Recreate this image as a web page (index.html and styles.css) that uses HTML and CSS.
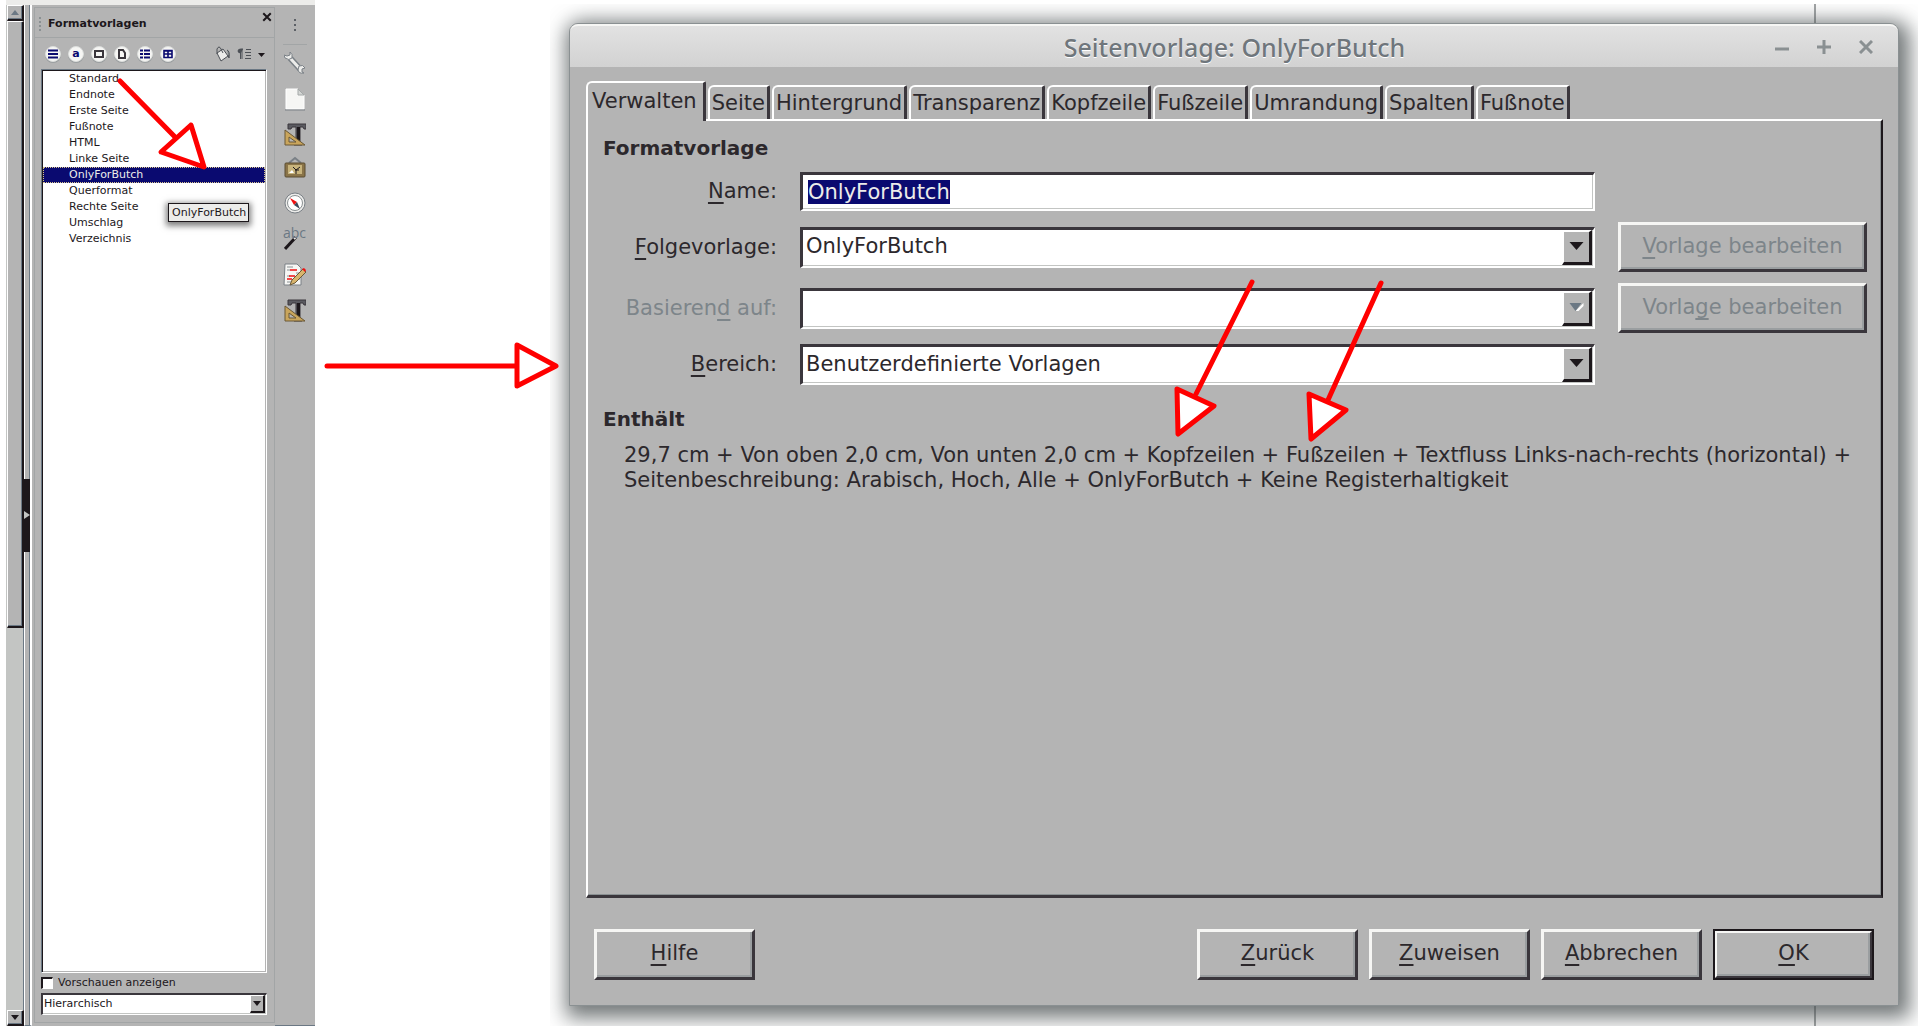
FILE: index.html
```html
<!DOCTYPE html>
<html lang="de">
<head>
<meta charset="utf-8">
<title>Seitenvorlage: OnlyForButch</title>
<link rel="stylesheet" href="styles.css">
</head>
<body>
<svg width="0" height="0" class="defs" aria-hidden="true">
  <symbol id="design" viewBox="0 0 22 24">
    <path d="M4 1h18v5h-2l-1-2h-3v15l2 1v2h-8v-2l2-1V4H8L7 6H4z" fill="#5a5a60" stroke="#3a363c"/>
    <path d="M13 4h3v16h-3z" fill="#1c171b"/>
    <path d="M1 7v15h20z" fill="#c9a55c" stroke="#6a5836"/>
    <path d="M5 14v5h7z" fill="#b4b4b4" stroke="#6a5836"/>
  </symbol>
</svg>
<main class="page">
  <section class="writer" aria-label="Formatvorlagen">
    <div class="scroll">
      <button class="scroll-btn" aria-label="Nach oben"><svg width="8" height="5" viewBox="0 0 8 5"><path d="M4 0l4 5H0z" fill="#6b7884"/></svg></button>
      <div class="thumb"></div>
      <div class="trough"></div>
      <button class="scroll-btn" aria-label="Nach unten"><svg width="8" height="5" viewBox="0 0 8 5"><path d="M0 0h8L4 5z" fill="#1c171b"/></svg></button>
    </div>
    <div class="splitter"><button class="handle" aria-label="Seitenleiste ausblenden"><svg width="6" height="8" viewBox="0 0 6 8"><path d="M0 0l6 4-6 4z" fill="#c3c5c3"/></svg></button></div>
    <div class="deck">
      <header class="deck-head">
        <i class="grip"></i>
        <h2>Formatvorlagen</h2>
        <button class="plain close" aria-label="Schließen"><svg width="10" height="10" viewBox="0 0 8 8"><path d="M1 1l6 6M7 1L1 7" stroke="#1c171b" stroke-width="1.600"/></svg></button>
      </header>
      <div class="tools">
        <button class="round" aria-label="Absatzvorlagen"><svg width="10" height="10" viewBox="0 0 10 10"><path d="M0 1.500h10M0 5h10M0 8.500h10" stroke="#0a0a70" stroke-width="2"/></svg></button>
        <button class="round letter" aria-label="Zeichenvorlagen">a</button>
        <button class="round" aria-label="Rahmenvorlagen"><svg width="10" height="10" viewBox="0 0 10 10"><rect x="1" y="2" width="8" height="6" fill="none" stroke="#3a363c" stroke-width="2"/></svg></button>
        <button class="round" aria-label="Seitenvorlagen"><svg width="10" height="10" viewBox="0 0 10 10"><path d="M2 1h4l2 3v5H2z" fill="none" stroke="#3a363c" stroke-width="2"/></svg></button>
        <button class="round" aria-label="Listenvorlagen"><svg width="10" height="10" viewBox="0 0 10 10"><path d="M0 1.500h3M4 1.500h6M0 5h3M4 5h6M0 8.500h3M4 8.500h6" stroke="#0a0a70" stroke-width="2"/></svg></button>
        <button class="round" aria-label="Tabellenvorlagen"><svg width="10" height="10" viewBox="0 0 10 10"><path d="M1 1.500h8v7H1zM1 2h8M1 5h8M5 2v6" fill="none" stroke="#0a0a70" stroke-width="1.600"/></svg></button>
        <button class="plain fill" aria-label="Gießkannenmodus"><svg width="16" height="16" viewBox="0 0 16 16"><path d="M3 7l6-4 5 7-7 5z" fill="#ececea" stroke="#4c5056"/><path d="M3 8V3q2-4 4 0l2 4" fill="none" stroke="#4c5056"/><path d="M13 4q3 1 2 8l-1-3" fill="#8a9092" stroke="#4c5056"/></svg></button>
        <button class="plain" aria-label="Neue Vorlage"><svg width="28" height="12" viewBox="0 0 28 12"><path d="M5 1v10M3.500 1v10M6 1h-2q-3 0-3 2t3 2" stroke="#4c5056" fill="#4c5056"/><path d="M9 1.500h5M8 4.500h6M9 7.500h5M8 10.500h6" stroke="#4c5056"/><path d="M21 5h7l-3.500 4z" fill="#1c171b"/></svg></button>
      </div>
      <div class="list-wrap">
        <ul class="styles" role="listbox" aria-label="Seitenvorlagen">
          <li role="option">Standard</li>
          <li role="option">Endnote</li>
          <li role="option">Erste Seite</li>
          <li role="option">Fußnote</li>
          <li role="option">HTML</li>
          <li role="option">Linke Seite</li>
          <li role="option" aria-selected="true" class="chosen">OnlyForButch</li>
          <li role="option">Querformat</li>
          <li role="option">Rechte Seite</li>
          <li role="option">Umschlag</li>
          <li role="option">Verzeichnis</li>
        </ul>
        <div class="tip" role="tooltip">OnlyForButch</div>
        <svg class="arrow arrow-list" width="100" height="100" viewBox="0 0 100 100"><path d="M7 11l56 57"/><path class="head" d="M78 55L48 82l43 15z"/></svg>
      </div>
      <label class="preview"><input type="checkbox">Vorschauen anzeigen</label>
      <div class="combo small"><select aria-label="Anzeige"><option>Hierarchisch</option></select><svg class="down" viewBox="0 0 8 5"><path d="M0 0h8L4 5z"/></svg></div>
    </div>
    <nav class="rail" aria-label="Seitenleiste">
      <button class="plain menu" aria-label="Einstellungen"><i></i><i></i><i></i></button>
      <button class="plain" aria-label="Eigenschaften"><svg width="22" height="24" viewBox="0 0 22 24"><path d="M6 7l11 12" stroke="#7a8086" stroke-width="6"/><path d="M6 7l11 12" stroke="#ececea" stroke-width="3"/><path d="M6 1Q9 3 8 7 5 10 1 7l-1-3 3 1 3-1zM15 15q4-2 6 2l-3 1v3l2 1q-5 1-6-3z" fill="#ececea" stroke="#7a8086"/></svg></button>
      <button class="plain" aria-label="Seite"><svg width="20" height="24" viewBox="0 0 20 24"><path d="M1 2h12l6 6v14H1z" fill="#f6f6f4" stroke="#fff"/><path d="M13 2v6h6z" fill="#d4d6d4" stroke="#a4a8a8"/><path d="M0 23h20" stroke="#7a8086"/></svg></button>
      <button class="plain" aria-label="Formatvorlagen"><svg width="22" height="24"><use href="#design"/></svg></button>
      <button class="plain" aria-label="Gallery"><svg width="22" height="24" viewBox="0 0 22 24"><path d="M5 8l6-5 6 5" fill="none" stroke="#7a8086" stroke-width="2"/><rect x="1" y="8" width="20" height="14" rx="1" fill="#8a7448" stroke="#5a4c32"/><rect x="4" y="10" width="14" height="9" fill="#c8b47c"/><path d="M12 19v-4l-3-3M12 15l4-3M11 15h4" stroke="#1c171b" fill="none"/><path d="M5 18l3-3 2 3z" fill="#fff"/></svg></button>
      <button class="plain" aria-label="Navigator"><svg width="22" height="24" viewBox="0 0 22 24"><circle cx="11" cy="12" r="10" fill="#ececea" stroke="#7a8086"/><circle cx="11" cy="12" r="7.500" fill="#fff" stroke="#8a9092"/><path d="M6 7l7 4-3 3z" fill="#f01010"/><path d="M16 18l-6-4 3-3z" fill="#3c4a5c"/></svg></button>
      <button class="plain abc" aria-label="Stilprüfung"><span>abc</span><svg width="22" height="24" viewBox="0 0 22 24"><path d="M1 22L12 10" stroke="#1c171b" stroke-width="3"/><path d="M10 12l2-2" stroke="#ececea" stroke-width="2"/></svg></button>
      <button class="plain" aria-label="Änderungen"><svg width="24" height="24" viewBox="0 0 24 24"><path d="M2 1h12l4 4v17H1z" fill="#f6f6f4" stroke="#7a8086"/><path d="M4 4h6M4 7h3M13 10h3M4 13h3M12 16h5M4 19h4" stroke="#8a9092"/><path d="M7 7h7M6 13h6M4 16h5" stroke="#f01010" stroke-width="1.500"/><path d="M7 22l2-5L20 6l3 3-11 11z" fill="#d8b46c" stroke="#6a5836"/><path d="M19 6l2-1 2 2-1 2z" fill="#f01010"/></svg></button>
      <button class="plain" aria-label="Designs"><svg width="22" height="24"><use href="#design"/></svg></button>
    </nav>
  </section>

  <svg class="arrow arrow-main" width="240" height="60" viewBox="0 0 240 60"><path d="M5 31h190"/><path class="head" d="M195 10v41l39-20z"/></svg>

  <section class="stage">
    <div class="window" role="dialog" aria-labelledby="dlg-title">
      <header class="titlebar">
        <h1 id="dlg-title">Seitenvorlage: OnlyForButch</h1>
        <div class="winbtns">
          <button class="plain" aria-label="Minimieren"><svg width="14" height="14" viewBox="0 0 14 14"><path d="M0 9h14"/></svg></button>
          <button class="plain" aria-label="Maximieren"><svg width="14" height="14" viewBox="0 0 14 14"><path d="M0 7h14M7 0v14"/></svg></button>
          <button class="plain" aria-label="Schließen"><svg width="14" height="14" viewBox="0 0 14 14"><path d="M1 1l12 12M13 1L1 13" stroke-width="4"/></svg></button>
        </div>
      </header>
      <div class="tabs" role="tablist">
        <button role="tab" aria-selected="true" class="tab active">Verwalten</button>
        <button role="tab" class="tab">Seite</button>
        <button role="tab" class="tab">Hintergrund</button>
        <button role="tab" class="tab">Transparenz</button>
        <button role="tab" class="tab">Kopfzeile</button>
        <button role="tab" class="tab">Fußzeile</button>
        <button role="tab" class="tab">Umrandung</button>
        <button role="tab" class="tab">Spalten</button>
        <button role="tab" class="tab">Fußnote</button>
      </div>
      <div class="panel" role="tabpanel">
        <h3>Formatvorlage</h3>
        <div class="form">
          <label for="name"><u>N</u>ame:</label>
          <input id="name" class="field" type="text" value="OnlyForButch" autofocus>
          <span></span>
          <label for="next"><u>F</u>olgevorlage:</label>
          <div class="combo"><select id="next"><option>OnlyForButch</option></select><svg class="down" viewBox="0 0 14 8"><path d="M0 0h14L7 8z"/></svg></div>
          <button class="btn" disabled><span><u>V</u>orlage bearbeiten</span></button>
          <label for="base" class="off">Basieren<u>d</u> auf:</label>
          <div class="combo disabled"><select id="base" disabled><option></option></select><svg class="down" viewBox="0 0 14 8"><path class="glint" d="M14 0v3L8 9 6 8z"/><path d="M0 0h12L6 8z"/></svg></div>
          <button class="btn" disabled><span>Vorla<u>g</u>e bearbeiten</span></button>
          <label for="area"><u>B</u>ereich:</label>
          <div class="combo"><select id="area"><option>Benutzerdefinierte Vorlagen</option></select><svg class="down" viewBox="0 0 14 8"><path d="M0 0h14L7 8z"/></svg></div>
        </div>
        <h3>Enthält</h3>
        <p>29,7 cm + Von oben 2,0 cm, Von unten 2,0 cm + Kopfzeilen + Fußzeilen + Textfluss Links-nach-rechts (horizontal) + Seitenbeschreibung: Arabisch, Hoch, Alle + OnlyForButch + Keine Registerhaltigkeit</p>
        <svg class="arrow arrow-notes" width="90" height="170" viewBox="0 0 90 170"><path d="M83 6L27 118"/><path class="head" d="M8 113L45 130 9 158z"/></svg>
        <svg class="arrow arrow-foot" width="90" height="170" viewBox="0 0 90 170"><path d="M80 7L27 124"/><path class="head" d="M8 118L45 134 10 163z"/></svg>
      </div>
      <footer class="actions">
        <button class="btn"><span><u>H</u>ilfe</span></button>
        <i class="spring"></i>
        <button class="btn"><span><u>Z</u>urück</span></button>
        <button class="btn"><span><u>Z</u>uweisen</span></button>
        <button class="btn"><span><u>A</u>bbrechen</span></button>
        <button class="btn default"><span><u>O</u>K</span></button>
      </footer>
    </div>
  </section>
</main>
<script src="script.js"></script>
</body>
</html>
```
FILE: script.js
```js
const nameField = document.getElementById('name');
nameField.focus();
nameField.select();
```
FILE: styles.css
```css
:root {
  --face: #b4b4b4;
  --trough: #c3c5c3;
  --slate: #6b7884;
  --mid: #8a9092;
  --ink: #1c171b;
  --navy: #0a0a70;
  --light: #ececea;
}
* { box-sizing: border-box; }
body {
  margin: 0;
  background: #fff;
  color: var(--ink);
  font: 11px/16px "DejaVu Sans", sans-serif;
}
button, input, select { font: inherit; color: inherit; }
button { padding: 0; border: 0; background: var(--face); }
h1, h2, h3, p, ul { margin: 0; padding: 0; }
svg { display: block; }
.defs { position: absolute; }
.plain { background: none; display: flex; }
.page {
  position: relative;
  display: flex;
  min-height: 100vh;
  padding: 0 2px 9px 6px;
}

/* Writer side bar */
.writer {
  display: flex;
  flex: none;
  width: 309px;
  border-top: 5px solid var(--light);
  background: var(--face);
}
.scroll {
  display: flex;
  flex-direction: column;
  width: 18px;
  background: var(--trough);
  padding-left: 1px;
}
.scroll-btn, .thumb {
  border: solid;
  border-width: 1px 2px 2px 1px;
  border-color: #fff var(--ink) var(--ink) #fff;
  background: var(--face);
  box-shadow: inset -1px -1px var(--slate);
}
.scroll-btn {
  height: 16px;
  display: flex;
  align-items: center;
  justify-content: center;
}
.thumb { flex: 60; }
.trough { flex: 38; border-right: 1px solid var(--slate); }
.splitter {
  display: flex;
  align-items: center;
  width: 8px;
  margin-right: 2px;
  border-left: 1px solid #fff;
  border-right: 2px solid #fff;
  border-bottom: 1px solid var(--slate);
  box-shadow: inset -1px 0 var(--slate);
}
.handle {
  flex: none;
  width: 7px;
  height: 73px;
  margin-left: -2px;
  padding-left: 1px;
  background: var(--ink);
}
.deck {
  display: flex;
  flex-direction: column;
  width: 241px;
  margin: 2px 0 3px;
  padding: 0 7px 7px 6px;
  border: 1px solid #a2a5a6;
}
.deck-head {
  display: flex;
  align-items: center;
  height: 30px;
  margin: 0 -7px 0 -6px;
  padding: 2px 2px 0 4px;
  border-bottom: 1px solid #a2a5a6;
}
.deck-head h2 { flex: 1; font-size: 11px; }
.grip {
  width: 2px;
  height: 14px;
  margin-right: 7px;
  background: repeating-linear-gradient(var(--mid) 0 2px, transparent 2px 4px);
}
.close { align-self: flex-start; margin-top: 2px; }
.tools {
  display: flex;
  align-items: center;
  gap: 7px;
  height: 31px;
  padding: 1px 2px 0 4px;
}
.round {
  display: flex;
  flex: none;
  align-items: center;
  justify-content: center;
  width: 16px;
  height: 16px;
  border: 1px solid #dcdedc;
  border-radius: 50%;
  background: #f6f6f4;
  box-shadow: 0 1px #9a9ea0;
}
.letter { color: var(--navy); font-weight: bold; line-height: 12px; }
.fill { margin-left: auto; }
.list-wrap { position: relative; display: flex; flex: 1; }
.styles {
  flex: 1;
  list-style: none;
  background: #fff;
  border: solid;
  border-width: 1px;
  border-color: var(--slate) #fff #fff var(--slate);
  box-shadow: inset 1px 1px var(--ink), inset -1px -1px var(--face);
  padding: 1px;
}
.styles li { padding-left: 25px; border: 1px solid transparent; line-height: 14px; }
.styles .chosen { background: var(--navy); color: var(--light); border: 1px dotted #d8c48c; }
.tip {
  position: absolute;
  left: 127px;
  top: 134px;
  padding: 0 2px 0 3px;
  border: 1px solid var(--ink);
  background: var(--light);
  line-height: 17px;
  box-shadow: 0 2px 6px 2px rgba(0, 0, 0, .5);
}
.preview { display: flex; align-items: center; gap: 5px; height: 20px; }
.preview input {
  appearance: none;
  width: 12px;
  height: 12px;
  margin: 0;
  background: #fff;
  border: solid;
  border-width: 2px 1px 1px 2px;
  border-color: var(--ink) #fff #fff var(--ink);
}
.rail {
  flex: 1;
  display: flex;
  flex-direction: column;
  align-items: center;
  gap: 12px;
  border-bottom: 1px solid var(--slate);
}
.menu {
  flex-direction: column;
  align-items: center;
  gap: 3px;
  width: 24px;
  height: 36px;
  margin-top: 4px;
  padding-top: 10px;
  border-bottom: 1px solid #a2a5a6;
}
.rail .menu + .plain { margin-top: -6px; }
.menu i { width: 2px; height: 2px; background: #5c6066; }
.rail .plain:nth-child(5) { margin-top: -4px; }
.abc { position: relative; }
.abc span { position: absolute; left: -1px; top: -1px; color: var(--slate); font: 14px/14px "Open Sans", sans-serif; }

/* Red annotation arrows */
.arrow { position: absolute; z-index: 2; pointer-events: none; overflow: visible; }
.arrow path { fill: none; stroke: #f00; stroke-width: 5; stroke-linecap: round; stroke-linejoin: round; }
.arrow .head { fill: #fff; }
.arrow-list { left: 72px; top: 1px; }
.arrow-main { left: 322px; top: 335px; }
.arrow-notes { left: 581px; top: 155px; }
.arrow-foot { left: 713px; top: 155px; }

/* Dialog */
.stage {
  display: flex;
  flex: 1;
  margin: 4px 0 0 235px;
  padding: 19px 19px 20px 19px;
  overflow: hidden;
  background: linear-gradient(#a2a5a6, #a2a5a6) right 102px top 0 / 2px 100% no-repeat #fff;
}
.window {
  display: flex;
  flex: 1;
  flex-direction: column;
  border: 1px solid var(--mid);
  border-radius: 9px 9px 0 0;
  background: var(--face);
  box-shadow: 4px 5px 20px 7px rgba(70, 76, 78, .75);
  font-size: 21px;
  line-height: 24px;
  color: #2c282c;
}
.titlebar {
  display: flex;
  align-items: center;
  height: 43px;
  padding: 1px 25px 0 124px;
  border-top: 2px solid #f6f6f4;
  border-radius: 8px 8px 0 0;
  background: linear-gradient(#e2e2e2, #d2d2d2);
}
.titlebar h1 {
  flex: 1;
  text-align: center;
  font: 500 25px/32px "Noto Sans", sans-serif;
  color: #6f767c;
  text-shadow: 0 1px #fff;
}
.winbtns { display: flex; gap: 28px; }
.winbtns path { stroke: var(--mid); stroke-width: 3; }
.tabs {
  display: flex;
  align-items: flex-end;
  gap: 2px;
  margin: 14px 15px 0 16px;
}
.tab {
  height: 34px;
  padding: 0 2px;
  border: solid;
  border-width: 2px 3px 0 2px;
  border-color: #fff #3a363c #fff #fff;
  border-radius: 6px 2px 0 0;
}
.tab.active {
  position: relative;
  z-index: 1;
  height: 40px;
  margin-bottom: -2px;
  padding: 0 6px 2px 4px;
}
.panel {
  position: relative;
  flex: 1;
  margin: 0 15px 0 16px;
  padding: 15px 14px 20px 15px;
  border: solid;
  border-width: 2px 2px 3px 2px;
  border-color: #fff var(--ink) #3a363c #fff;
  box-shadow: inset -1px -1px var(--mid);
}
h3 { font-size: 20px; line-height: 24px; }
.form {
  display: grid;
  grid-template-columns: 174px 1fr 249px;
  align-items: center;
  gap: 11px 23px;
  margin: 12px 0 22px;
}
.form label { text-align: right; padding-bottom: 1px; }
.off { color: #7d858a; }
u { text-underline-offset: 4px; text-decoration-thickness: 2px; text-decoration-skip-ink: none; }
.field, .combo {
  width: 100%;
  background: #fff;
  border: solid;
  border-width: 3px 2px 2px 3px;
  border-color: #3a363c #fff #fff #3a363c;
  box-shadow: inset -1px -1px #c3c5c3;
}
.field { height: 39px; padding: 0 5px 1px; outline: none; border-radius: 0; }
.field::selection { background: var(--navy); color: var(--light); }
.combo { position: relative; height: 41px; }
.combo select {
  appearance: none;
  width: 100%;
  height: 100%;
  padding: 0 34px 3px 3px;
  border: 0;
  background: none;
  opacity: 1;
}
.down {
  position: absolute;
  right: 1px;
  top: 0;
  width: 30px;
  height: 35px;
  padding: 10px 5px 12px;
  background: var(--face);
  border: solid;
  border-width: 2px 3px 3px 2px;
  border-color: #fff var(--ink) var(--ink) #fff;
  pointer-events: none;
}
.down path { fill: var(--ink); }
.disabled .down path { fill: var(--slate); }
.disabled .down .glint { fill: #fff; }
.combo.small { height: 22px; border-width: 2px 1px 1px 2px; }
.small select { padding: 0 16px 1px 1px; }
.small .down { width: 15px; height: 18px; padding: 4px 2px; border-width: 1px 2px 2px 1px; }
.btn {
  height: 50px;
  padding-bottom: 3px;
  border: solid;
  border-width: 3px;
  border-color: #f6f6f4 #3a363c #3a363c #f6f6f4;
  box-shadow: inset -2px -2px #9a9ea0;
}
.btn:disabled { color: #7d858a; }
.panel p { padding-left: 21px; line-height: 25px; margin-top: 12px; }
.actions {
  display: flex;
  gap: 11px;
  margin: 31px 24px 25px;
}
.actions .btn { width: 161px; height: 51px; }
.spring { flex: 1; }
.btn.default { outline: 2px solid var(--ink); outline-offset: -2px; border-width: 4px; }
```
